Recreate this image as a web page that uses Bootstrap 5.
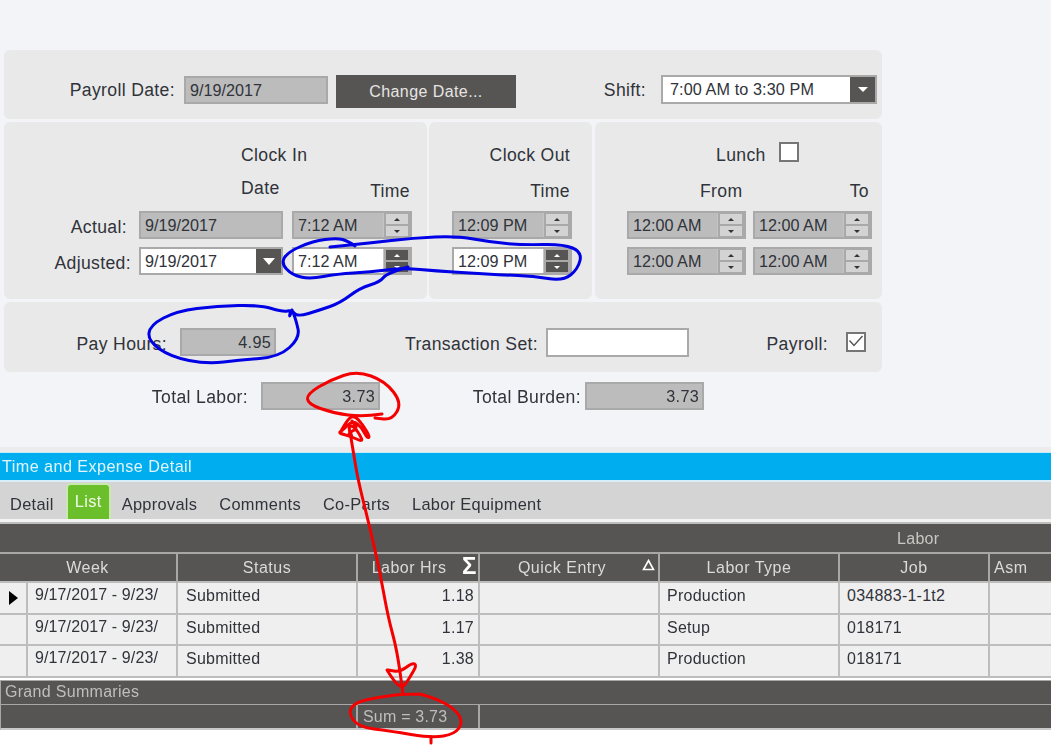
<!DOCTYPE html>
<html lang="en"><head><meta charset="utf-8"><title>Time and Expense</title>
<link href="https://cdn.jsdelivr.net/npm/bootstrap@5.3.0/dist/css/bootstrap.min.css" rel="stylesheet">
<style>
html,body{margin:0;height:749px;overflow:hidden;background:#fff}
body{font:16.2px/20px "Liberation Sans",Arial,sans-serif;color:#30333a}
.shot{position:relative;width:1051px;height:749px;overflow:hidden;filter:blur(.35px)}
.top-area{background:#f3f4f7;height:447px;padding:50px 169px 0 4px;display:flex;flex-direction:column;gap:3px}
.gap-band{height:5px;background:#ececec}
.pane{background:#e9e9e9;border-radius:6px}
.lab{font-size:17.6px;letter-spacing:.35px;white-space:nowrap;line-height:20px}
.lab-r{text-align:right}
.fld{height:28px;background:#bcbcbc;border:2px solid #a9a9a9;padding:0 4px;line-height:24px;white-space:nowrap}
.fld.live{background:#fff}
.num{text-align:right;padding-right:3px;letter-spacing:.3px}
.dk{background:#575553;display:flex;align-items:center;justify-content:center}
.tri{display:block;width:0;height:0;border-left:6px solid transparent;border-right:6px solid transparent;border-top:7px solid #fff}
.spin{display:flex;height:28px;background:#bcbcbc;border:2px solid #a9a9a9;width:120px}
.spin .val{flex:1;padding-left:4px;line-height:24px;white-space:nowrap}
.spin.live .val{background:#fff}
.arrows{width:27px;display:flex;flex-direction:column;gap:2px;padding:1px 2px;background:#a9a9a9;border-left:1px solid #c4c4c4}
.arrows span{flex:1;background:#d3d3d3;display:flex;align-items:center;justify-content:center}
.spin.live .arrows span{background:#575553}
.arrows i{display:block;width:0;height:0;border-left:3px solid transparent;border-right:3px solid transparent}
.up i{border-bottom:3px solid #30333a}
.dn i{border-top:3px solid #30333a}
.spin.live .up i{border-bottom-color:#fff}
.spin.live .dn i{border-top-color:#fff}
.chk{width:20px;height:20px;background:#fff;border:2px solid #767676;display:block}
/* first pane */
.pane-date{height:69px;display:flex;align-items:flex-start;padding-top:25px}
.pd-lab{width:171px;margin-top:5px}
.pd-fld{width:144px;margin:1px 0 0 9px}
.pd-btn{width:180px;height:33px;margin-left:8px;color:#e6e4e2;font-size:16px;letter-spacing:.42px;padding:0;border:0;border-radius:0}
.pd-btn:hover{background:#575553;color:#e6e4e2}
.sh-lab{width:130px;margin-top:5px}
.sh-fld{width:216px;height:29px;margin-left:15px;padding:0;display:flex}
.sh-txt{flex:1;padding-left:7px;line-height:25px;letter-spacing:.1px}
.sh-btn{width:25px}
.sh-btn .tri{border-left-width:5px;border-right-width:5px;border-top-width:5px}
/* middle */
.mid{display:flex;height:177px}
.pane-in{width:423px;display:grid;grid-template-columns:135px 144px 9px 120px;grid-template-rows:49px 40px 36px 28px;align-content:start}
.t-clock{grid-column:2/5;padding:23px 0 0 102px}
.t-date{grid-column:2;padding-top:7px;padding-left:102px}
.t-time{grid-column:4;padding-top:10px;text-align:right;padding-right:2px}
.l-act{grid-column:1;padding:6px 12px 0 0}
.l-adj{grid-column:1;padding:6px 8px 0 0}
.c-fld{grid-column:2}
.c-time{grid-column:4}
.date-live{padding:0;display:flex;height:28px}
.date-live .sh-txt{padding-left:4px;line-height:24px;letter-spacing:0}
.date-live .dk{width:25px}
.pane-out{width:163px;margin-left:2px;padding:23px 0 0 23px}
.out-top{text-align:right;width:118px;height:26px}
.out-time{text-align:right;width:118px;padding-top:10px;height:40px}
.stack{display:flex;flex-direction:column;gap:8px}
.pane-lunch{width:287px;margin-left:3px;display:grid;grid-template-columns:119px 119px;column-gap:7px;padding:23px 0 0 32px;grid-template-rows:26px 40px 36px 28px;align-content:start}
.lunch-head{grid-column:1/3;display:flex;padding-left:89px}
.chk-lunch{margin:-3px 0 0 13px}
.t-from{padding:10px 0 0 73px;white-space:nowrap}
.t-to{padding-top:10px;text-align:right;padding-right:3px}
.pane-lunch .spin{width:119px}
/* pay */
.pane-pay{height:70px;display:flex;align-items:flex-start;padding-top:26px}
.pp-a{width:163px;margin-top:6px}
.pp-fld{width:96px;margin-left:13px}
.pp-b{width:262px;margin-top:6px}
.pp-fld2{width:143px;height:29px;margin-left:8px;background:#fff}
.pp-c{width:139px;margin-top:6px}
.chk-pay{margin:4px 0 0 18px}
.totals{display:flex;align-items:flex-start;padding-top:7px}
.tt-a{width:244px;margin-top:5px}
.tt-fld{width:119px;margin-left:13px}
.tt-b{width:201px;margin-top:5px}
.tt-fld2{width:119px;margin-left:4px}
/* lower */
.title-bar{height:30px;background:#00aeef;border-top:1px solid #c8e9f8;border-bottom:2px solid #d8eefa;color:#e2f5fc;padding:3px 0 0 2px;font-size:16.2px;letter-spacing:.43px}
.tab-strip{height:40px;background:#d4d4d4;border-bottom:3px solid #f3f3f3;display:flex;padding-top:1px;font-size:16.4px;letter-spacing:.3px}
.tabx{padding-top:11px;white-space:nowrap}
.tab-1{margin-left:10px}
.tab-2{margin-left:12px;background:#6abf2b;color:#f1fae8;border:2px solid #c9e8b0;border-bottom-width:0;border-radius:5px 5px 0 0;width:45px;text-align:center;padding-top:6px;height:36px}
.tab-3{margin-left:11px}.tab-4{margin-left:22px}.tab-5{margin-left:22px}.tab-6{margin-left:22px}
.grp{height:30px;background:#575553;color:#c9c6c3;position:relative;font-size:16px;letter-spacing:.3px;border-top:2px solid #bdbdbd}
.grp span{position:absolute;left:897px;top:5px}
.cols{display:grid;grid-template-columns:27px 150px 180px 122px 180px 180px 150px 63px;font-size:16px;letter-spacing:.25px;margin-left:-1px}
.hd{background:#575553;color:#dcdad8;height:31px;border-top:2px solid #a7a7a7;border-left:2px solid #a7a7a7;border-bottom:2px solid #bdbdbd;text-align:center;line-height:28px;position:relative;white-space:nowrap;overflow:hidden;letter-spacing:.5px}
.hd.first{border-left:0;grid-column:1/3}
.hd.lh{padding-right:18px}
.hd.qe{padding-right:14px}
.hd.as{text-align:left;padding-left:4px}
.cell{background:#efefef;height:31.5px;border-left:2px solid #bdbdbd;border-bottom:2px solid #bdbdbd;padding:3px 0 0 7px;white-space:nowrap;overflow:hidden}
.cell.st{padding-left:8px}
.cell.rt{text-align:right;padding-right:4px}
.cell.wk{padding-top:2px;padding-left:7px;letter-spacing:.12px}
.cell.first{border-left:0;padding:0}
.ptr{display:block;width:0;height:0;border-top:7px solid transparent;border-bottom:7px solid transparent;border-left:9px solid #000;margin:8px 0 0 10px}
.sig{position:absolute;right:1px;top:-1px;font-size:24px;font-weight:700;color:#fff;line-height:26px}
.sort{position:absolute;right:3px;top:5px;display:block}
.sum-a{margin-top:2px;height:25px;background:#575553;border:1px solid #a7a7a7;border-right:0;color:#c0bebc;padding:1px 0 0 4px;font-size:16px;letter-spacing:.3px}
.sum-b{height:25px;background:#575553;border-bottom:2px solid #c9c9c9;border-left:1px solid #a7a7a7;display:grid;grid-template-columns:355px 122px 1fr;color:#c0bebc;font-size:16px;letter-spacing:.2px}
.sum-b div+div{border-left:2px solid #a7a7a7;padding:2px 0 0 5px}
.sum-b div:last-child{padding:0}
.marks{position:absolute;left:0;top:0;pointer-events:none}
.marks path{fill:none;stroke-width:3;stroke-linecap:round;stroke-linejoin:round}
.m-blue{stroke:#0000e6}
.m-red{stroke:#f50000}
</style></head>
<body>
<div class="shot">
 <div class="top-area">
  <section class="pane pane-date">
   <div class="lab lab-r pd-lab">Payroll Date:</div>
   <div class="fld pd-fld">9/19/2017</div>
   <button type="button" class="btn dk pd-btn">Change Date...</button>
   <div class="lab lab-r sh-lab">Shift:</div>
   <div class="fld live sh-fld"><span class="sh-txt">7:00 AM to 3:30 PM</span><span class="dk sh-btn"><span class="tri"></span></span></div>
  </section>
  <div class="mid">
   <section class="pane pane-in">
    <div class="lab t-clock">Clock In</div>
    <div class="lab t-date">Date</div>
    <div class="lab t-time">Time</div>
    <div class="lab lab-r l-act">Actual:</div>
    <div class="c-fld"><div class="fld">9/19/2017</div></div>
    <div class="c-time"><div class="spin"><span class="val">7:12 AM</span><span class="arrows"><span class="up"><i></i></span><span class="dn"><i></i></span></span></div></div>
    <div class="lab lab-r l-adj">Adjusted:</div>
    <div class="c-fld"><div class="fld live date-live"><span class="sh-txt">9/19/2017</span><span class="dk"><span class="tri"></span></span></div></div>
    <div class="c-time"><div class="spin live"><span class="val">7:12 AM</span><span class="arrows"><span class="up"><i></i></span><span class="dn"><i></i></span></span></div></div>
   </section>
   <section class="pane pane-out">
    <div class="lab out-top">Clock Out</div>
    <div class="lab out-time">Time</div>
    <div class="stack">
     <div class="spin"><span class="val">12:09 PM</span><span class="arrows"><span class="up"><i></i></span><span class="dn"><i></i></span></span></div>
     <div class="spin live"><span class="val">12:09 PM</span><span class="arrows"><span class="up"><i></i></span><span class="dn"><i></i></span></span></div>
    </div>
   </section>
   <section class="pane pane-lunch">
    <div class="lunch-head"><span class="lab">Lunch</span><span class="chk chk-lunch"></span></div>
    <div class="lab t-from">From</div>
    <div class="lab t-to">To</div>
    <div><div class="spin"><span class="val">12:00 AM</span><span class="arrows"><span class="up"><i></i></span><span class="dn"><i></i></span></span></div></div>
    <div><div class="spin"><span class="val">12:00 AM</span><span class="arrows"><span class="up"><i></i></span><span class="dn"><i></i></span></span></div></div>
    <div><div class="spin"><span class="val">12:00 AM</span><span class="arrows"><span class="up"><i></i></span><span class="dn"><i></i></span></span></div></div>
    <div><div class="spin"><span class="val">12:00 AM</span><span class="arrows"><span class="up"><i></i></span><span class="dn"><i></i></span></span></div></div>
   </section>
  </div>
  <section class="pane pane-pay">
   <div class="lab lab-r pp-a">Pay Hours:</div>
   <div class="fld num pp-fld">4.95</div>
   <div class="lab lab-r pp-b">Transaction Set:</div>
   <div class="fld pp-fld2"></div>
   <div class="lab lab-r pp-c">Payroll:</div>
   <span class="chk chk-pay"><svg width="16" height="16" viewBox="0 0 16 16" class="d-block"><path d="M1.5 6.5 L6 11.5 L14.5 2" fill="none" stroke="#555" stroke-width="1.4"/></svg></span>
  </section>
  <div class="totals">
   <div class="lab lab-r tt-a">Total Labor:</div>
   <div class="fld num tt-fld">3.73</div>
   <div class="lab lab-r tt-b">Total Burden:</div>
   <div class="fld num tt-fld2">3.73</div>
  </div>
 </div>
 <div class="gap-band"></div>
 <div class="title-bar">Time and Expense Detail</div>
 <div class="tab-strip">
  <div class="tabx tab-1">Detail</div>
  <div class="tabx tab-2">List</div>
  <div class="tabx tab-3">Approvals</div>
  <div class="tabx tab-4">Comments</div>
  <div class="tabx tab-5">Co-Parts</div>
  <div class="tabx tab-6">Labor Equipment</div>
 </div>
 <div class="grp"><span>Labor</span></div>
 <div class="cols">
  <div class="hd first">Week</div>
  <div class="hd">Status</div>
  <div class="hd lh">Labor Hrs<span class="sig">Σ</span></div>
  <div class="hd qe">Quick Entry<svg class="sort" width="13" height="12" viewBox="0 0 13 12"><path d="M6.5 1.5 L11.5 10.5 H1.5 Z" fill="none" stroke="#fff" stroke-width="1.6"/></svg></div>
  <div class="hd">Labor Type</div>
  <div class="hd">Job</div>
  <div class="hd as">Asm</div>

  <div class="cell first"><span class="ptr"></span></div><div class="cell wk">9/17/2017 - 9/23/</div><div class="cell st">Submitted</div><div class="cell rt">1.18</div><div class="cell"></div><div class="cell">Production</div><div class="cell">034883-1-1t2</div><div class="cell"></div>
  <div class="cell first"></div><div class="cell wk">9/17/2017 - 9/23/</div><div class="cell st">Submitted</div><div class="cell rt">1.17</div><div class="cell"></div><div class="cell">Setup</div><div class="cell">018171</div><div class="cell"></div>
  <div class="cell first"></div><div class="cell wk">9/17/2017 - 9/23/</div><div class="cell st">Submitted</div><div class="cell rt">1.38</div><div class="cell"></div><div class="cell">Production</div><div class="cell">018171</div><div class="cell"></div>
 </div>
 <div class="sum-a">Grand Summaries</div>
 <div class="sum-b"><div></div><div>Sum = 3.73</div><div></div></div>

 <svg class="marks" width="1051" height="749" viewBox="0 0 1051 749" aria-hidden="true">
  <path class="m-blue" data-pts="355,246 348,241 337,238 313,241 288,252 281,263 292,275 310,279 337,274 370,272 403,268 437,271 470,273 503,275 533,276 563,281 578,269 582,252 563,244 523,245 490,242 457,236 413,238 370,243 330,247"/>
  <path class="m-blue" data-pts="408,267 387,273 380,282 360,288 340,303 320,310 297,317 291,309 289,318 292,310 283,312 260,305 217,306 177,311 150,325 148,341 171,357 207,364 240,360 279,357 300,338 296,320 292,310"/>
  <path class="m-red" data-pts="382,414 363,417 333,413 308,404 307,394 330,380 357,371 385,381 402,403 392,420 375,418"/>
  <path class="m-red" data-pts="340,433 348,418 355,416 363,425 370,437 367,438 362,428 353,420 343,430 338,433 350,436 363,442 360,435 353,425 348,428 353,438 347,434 358,428 352,421"/>
  <path class="m-red" data-pts="350,432 353,450 358,480 368,520 379,567 388,617 397,650 403,694"/>
  <path class="m-red" data-pts="387,670 395,683 403,688 410,677 417,665 412,663 400,672 388,670"/>
  <path class="m-red" data-pts="420,694 403,694 380,697 356,702 348,712 358,727 390,731 432,738 455,734 463,722 455,709 437,699 420,694"/>
  <path class="m-red" data-pts="431,737 431,743"/>
 </svg>
</div>
<script>
document.querySelectorAll('.marks path').forEach(function(p){
 var a=p.getAttribute('data-pts').trim().split(/\s+/).map(function(s){return s.split(',').map(Number)});
 var d='M'+a[0][0]+' '+a[0][1];
 for(var i=1;i<a.length-1;i++){
  var mx=(a[i][0]+a[i+1][0])/2,my=(a[i][1]+a[i+1][1])/2;
  d+=' Q'+a[i][0]+' '+a[i][1]+' '+mx+' '+my;
 }
 var l=a[a.length-1];d+=' L'+l[0]+' '+l[1];
 p.setAttribute('d',d);
});
</script>
<script src="https://cdn.jsdelivr.net/npm/bootstrap@5.3.0/dist/js/bootstrap.bundle.min.js"></script>
</body></html>
